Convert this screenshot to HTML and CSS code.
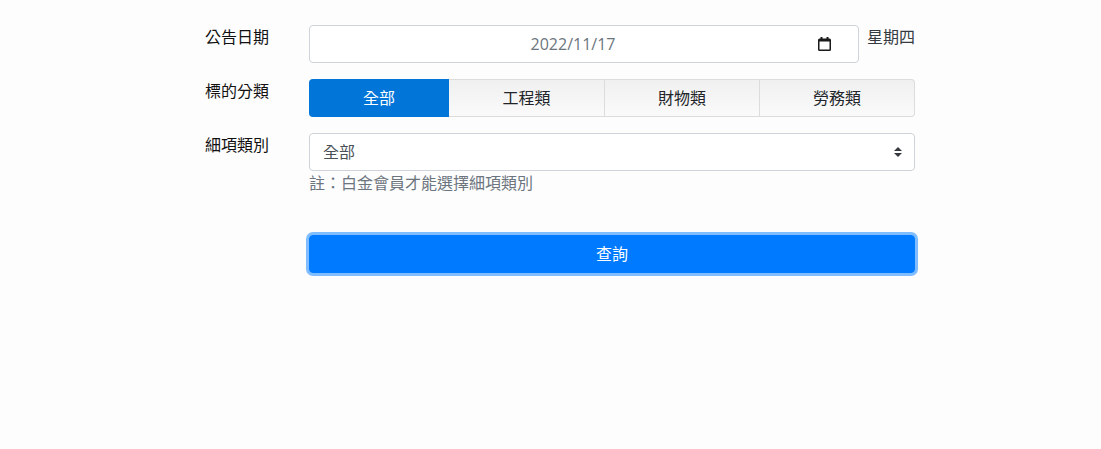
FILE: index.html
```html
<!DOCTYPE html>
<html lang="zh-Hant">

<head>
    <meta charset="UTF-8">
    <meta name="viewport" content="width=device-width, initial-scale=1.0">
    <title>公告查詢</title>
    <link rel="stylesheet" href="styles.css">
</head>

<body>
    <form class="search-form">
        <div class="form-row">
            <label class="row-label">公告日期</label>
            <div class="row-field date-field">
                <div class="input-wrap">
                    <input type="text" class="form-control date-input" value="2022/11/17">
                    <svg class="calendar-icon" width="13" height="14" viewBox="0 0 13 14">
                        <path d="M2.500 0h2v1.500h4V0h2v1.500h1A1.500 1.500 0 0 1 13 3v9.500a1.500 1.500 0 0 1-1.500 1.500h-10A1.500 1.500 0 0 1 0 12.500V3a1.500 1.500 0 0 1 1.500-1.500h1zM1.500 4.500v8h10v-8z" fill="#1a1a1a" />
                    </svg>
                </div>
                <span class="weekday">星期四</span>
            </div>
        </div>

        <div class="form-row">
            <label class="row-label">標的分類</label>
            <div class="row-field tabs">
                <button type="button" class="tab active">全部</button>
                <button type="button" class="tab">工程類</button>
                <button type="button" class="tab">財物類</button>
                <button type="button" class="tab">勞務類</button>
            </div>
        </div>

        <div class="form-row">
            <label class="row-label">細項類別</label>
            <div class="row-field">
                <div class="input-wrap">
                    <select class="form-control category-select">
                        <option>全部</option>
                    </select>
                    <svg class="select-arrows" width="8" height="10" viewBox="0 0 8 10">
                        <path d="M4 0L8 4H0zM4 10L0 6h8z" fill="#343a40" />
                    </svg>
                </div>
                <p class="note">註：白金會員才能選擇細項類別</p>
            </div>
        </div>

        <div class="form-row submit-row">
            <div class="row-label"></div>
            <div class="row-field">
                <button type="submit" class="submit-btn">查詢</button>
            </div>
        </div>
    </form>
</body>

</html>
```

FILE: styles.css
```css
* {
    box-sizing: border-box;
}

body {
    margin: 0;
    height: 449px;
    background-color: #fdfdfd;
    color: #212529;
    font-family: "Open Sans", "Noto Sans CJK TC", sans-serif;
    font-size: 16px;
    line-height: 24px;
}

.search-form {
    width: 710px;
    margin-left: 205px;
    padding-top: 25px;
}

.form-row {
    display: flex;
    margin-bottom: 16px;
}

.row-label {
    width: 104px;
    flex-shrink: 0;
    color: #111;
}

.row-field {
    flex: 1;
    min-width: 0;
}

.date-field {
    display: flex;
    gap: 8px;
}

.date-field .input-wrap {
    width: 550px;
}

.weekday {
    color: #343a40;
}

.input-wrap {
    position: relative;
}

.form-control {
    display: block;
    width: 100%;
    height: 38px;
    padding: 6px 13px;
    border: 1px solid #ced4da;
    border-radius: 4px;
    background-color: #fff;
    color: #495057;
    font: inherit;
    appearance: none;
}

.date-input {
    padding-right: 35px;
    color: #6c757d;
    text-align: center;
}

.calendar-icon {
    position: absolute;
    top: 12px;
    right: 28px;
}

.select-arrows {
    position: absolute;
    top: 14px;
    right: 13px;
}

.tabs {
    display: grid;
    grid-template-columns: 140px 156px 155px 155px;
}

.tab {
    height: 38px;
    padding: 0;
    border: 1px solid #dcdcdc;
    border-left-width: 0;
    background: linear-gradient(#f0f0f0, #fafafa);
    color: #212529;
    font: inherit;
}

.tab:last-child {
    border-radius: 0 4px 4px 0;
}

.tab.active {
    border: 0;
    border-radius: 4px 0 0 4px;
    background: #0275d8;
    color: #fff;
}

.note {
    margin: 0;
    color: #6c757d;
}

.submit-row {
    margin-top: 40px;
}

.submit-btn {
    display: block;
    width: 100%;
    height: 38px;
    border: 1px solid #007bff;
    border-radius: 4px;
    background-color: #007bff;
    box-shadow: 0 0 0 3px #80bdff;
    color: #fff;
    font: inherit;
}
```
